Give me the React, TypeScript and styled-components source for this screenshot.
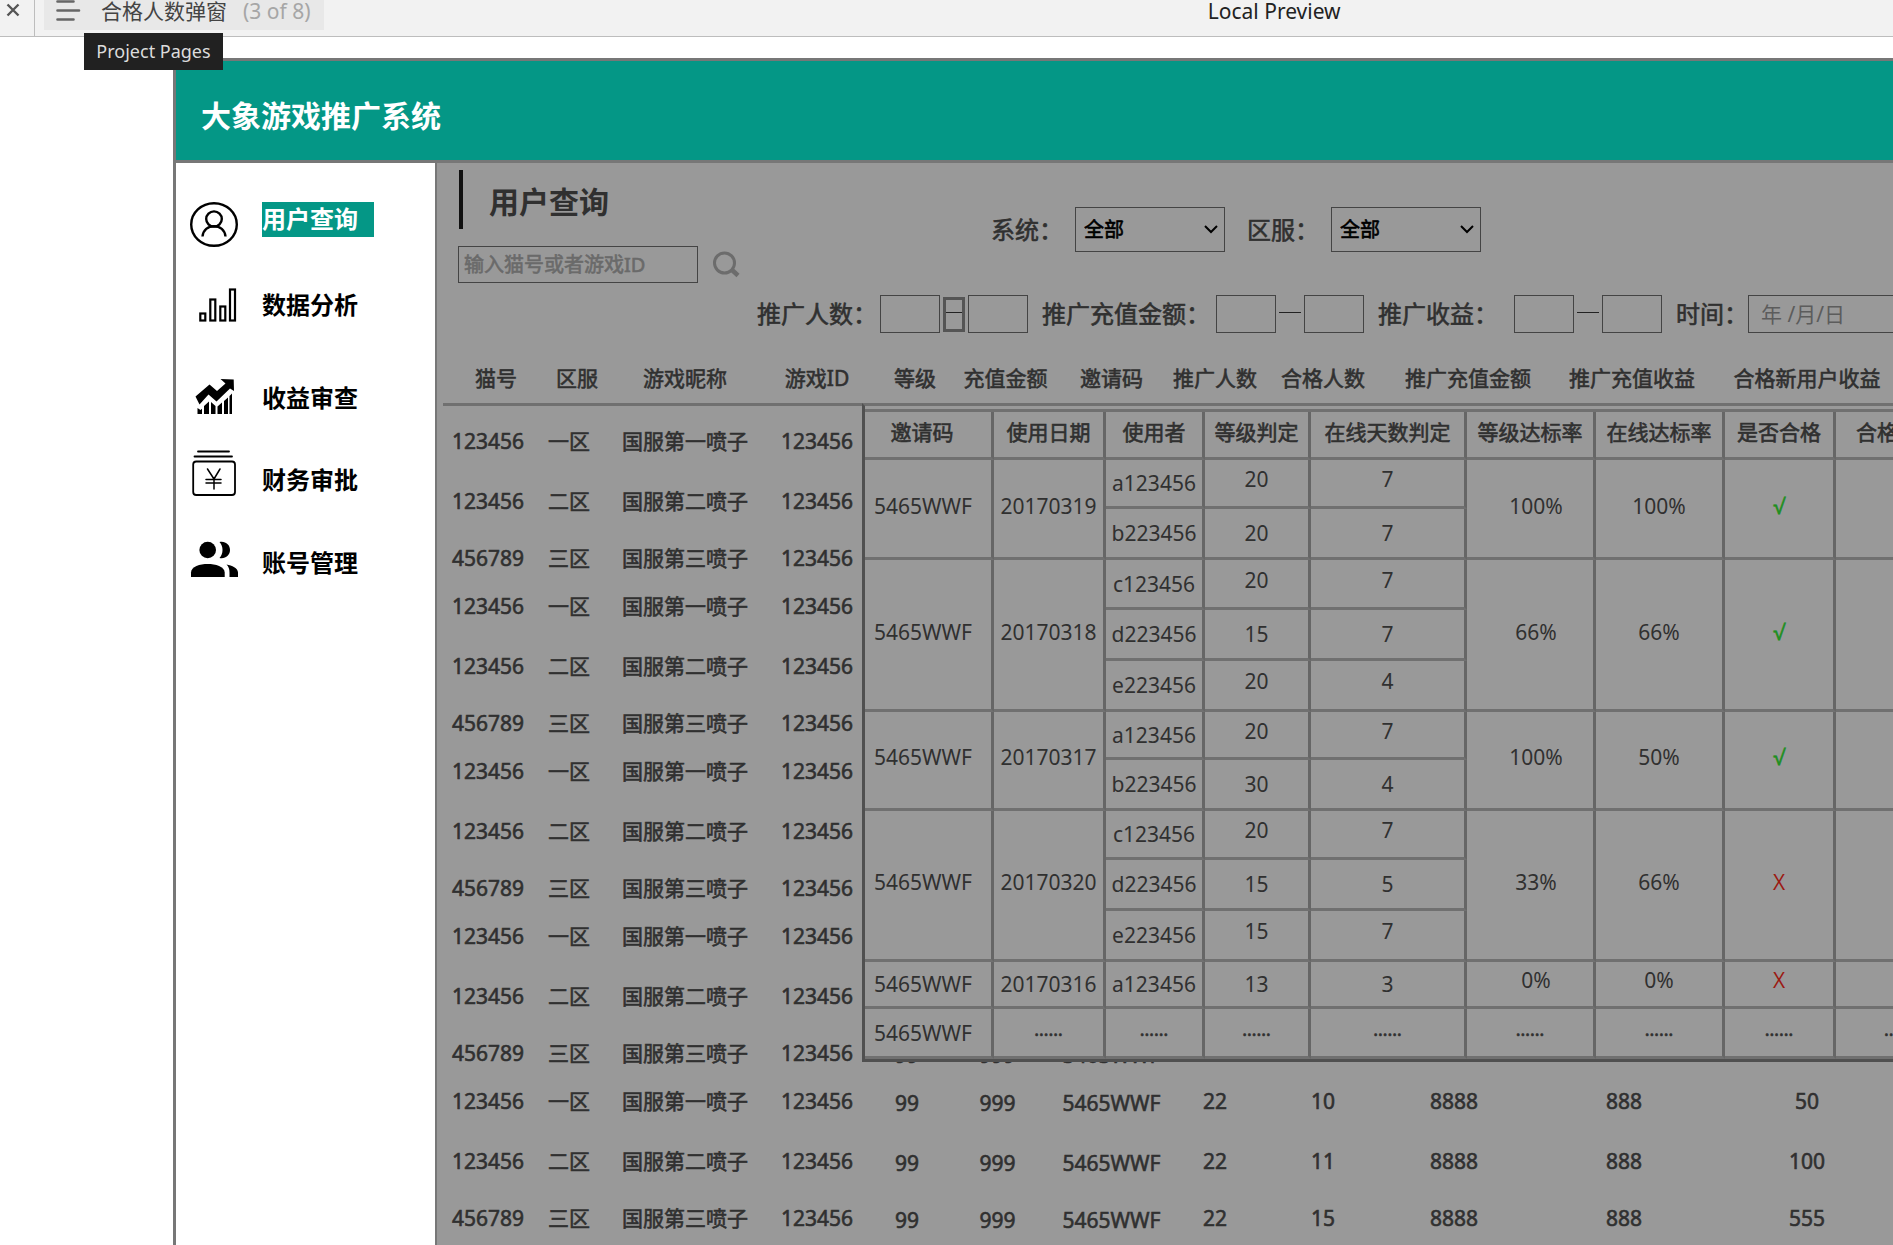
import React from "react";
import styled, { createGlobalStyle, css } from "styled-components";

const teal = "#049786";
const panel = "#999999";
const ink = "#303030";
const line = "#707070";

/* Semi-bold look for families that only ship regular and bold faces. */
const semiBold = css`
  font-weight: 400;
  -webkit-text-stroke: 0.6px currentColor;
`;

const GlobalStyle = createGlobalStyle`
  *, *::before, *::after { box-sizing: border-box; }
  body {
    margin: 0;
    background: #fff;
    color: ${ink};
    font-family: "Noto Sans", "Noto Sans CJK SC", sans-serif;
    font-size: 21px;
    overflow-x: hidden;
  }
  button, input, select { font: inherit; color: inherit; border-radius: 0; margin: 0; }
`;

const Page = styled.div`
  display: flex;
  flex-direction: column;
  min-height: 100vh;
  overflow: hidden;
`;

/* ---------- preview toolbar ---------- */

const Toolbar = styled.header`
  display: flex;
  align-items: flex-start;
  height: 37px;
  background: #f2f2f2;
  border-bottom: 1px solid #bdbdbd;
  font-size: 21px;
  line-height: 22px;
`;

const CloseButton = styled.button`
  width: 35px;
  height: 36px;
  padding: 3px 0 0 6px;
  border: 0;
  border-right: 1px solid #bdbdbd;
  background: none;
  display: flex;
  align-items: flex-start;
`;

const PageMenu = styled.div`
  position: relative;
  margin-left: 9px;
`;

const PageButton = styled.button`
  display: flex;
  align-items: flex-start;
  width: 280px;
  height: 30px;
  padding: 0 0 0 12px;
  border: 0;
  background: #e8e8e8;
  color: #444;
  line-height: 22px;
  white-space: nowrap;
`;

const PageName = styled.span`
  margin-left: 20px;
`;

const PageCount = styled.span`
  margin-left: 16px;
  color: #a6a6a6;
`;

const Tooltip = styled.div`
  position: absolute;
  z-index: 5;
  left: 40px;
  top: 33px;
  width: 139px;
  height: 37px;
  background: #212121;
  color: #dcdcdc;
  font-size: 18px;
  line-height: 36px;
  text-align: center;
  white-space: nowrap;
`;

const Spacer = styled.div<{ $grow: number }>`
  flex: ${(p) => p.$grow} 1 0;
`;

const PreviewLabel = styled.span`
  color: #222;
  white-space: nowrap;
`;

/* ---------- application frame ---------- */

const Frame = styled.div`
  flex: 1;
  display: flex;
  flex-direction: column;
  margin: 21px 0 0 173px;
  border-left: 3px solid #777;
  border-top: 3px solid #777;
`;

const Banner = styled.div`
  height: 102px;
  padding: 0 25px;
  background: ${teal};
  border-bottom: 3px solid #777;
  color: #fff;
  font-size: 30px;
  font-weight: 700;
  line-height: 110px;
`;

const Body = styled.div`
  flex: 1;
  display: flex;
`;

const Sidebar = styled.nav`
  flex: none;
  width: 259px;
  padding: 14px 0 0 14px;
`;

const NavItem = styled.div<{ $height: number }>`
  display: flex;
  align-items: center;
  gap: 24px;
  height: ${(p) => p.$height}px;
`;

const NavLink = styled.a<{ $active?: boolean }>`
  width: 112px;
  height: 35px;
  background: ${(p) => (p.$active ? teal : "transparent")};
  color: ${(p) => (p.$active ? "#fff" : "#000")};
  font-size: 24px;
  font-weight: 700;
  line-height: 34px;
  text-decoration: none;
`;

const NavIcon = styled.svg`
  flex: none;
  width: 48px;
  height: 60px;
  color: #000;
`;

const Main = styled.main`
  position: relative;
  flex: 1;
  min-width: 0;
  background: ${panel};
  border-left: 2px solid #777;
`;

/* ---------- filters ---------- */

const TopArea = styled.div`
  display: flex;
  padding: 7px 0 0 21px;
`;

const TitleColumn = styled.div`
  width: 533px;
`;

const Title = styled.h1`
  height: 59px;
  margin: 0 0 17px 1px;
  padding-left: 26px;
  border-left: 4px solid #111;
  font-size: 30px;
  font-weight: 700;
  line-height: 64px;
`;

const SearchForm = styled.form`
  display: flex;
  align-items: center;
  gap: 14px;
`;

const SearchInput = styled.input`
  width: 240px;
  height: 37px;
  padding: 0 5px;
  border: 1px solid #444;
  background: transparent;
  font-size: 20px;
  ${semiBold}
  &::placeholder { color: #6a6a6a; opacity: 1; }
`;

const SearchButton = styled.button`
  display: flex;
  padding: 0;
  border: 0;
  background: none;
  color: #6c6c6c;
`;

const SelectRow = styled.div`
  display: flex;
  align-items: center;
  gap: 22px;
  height: 45px;
  margin-top: 37px;
`;

const Field = styled.div`
  display: flex;
  align-items: center;
  gap: 12px;
`;

const Label = styled.label<{ $width?: number }>`
  flex: none;
  width: ${(p) => (p.$width ? `${p.$width}px` : "auto")};
  font-size: 24px;
  line-height: 36px;
  white-space: nowrap;
  ${semiBold}
`;

const SelectBox = styled.div`
  position: relative;
`;

const Select = styled.select`
  appearance: none;
  width: 150px;
  height: 45px;
  padding: 0 30px 0 8px;
  border: 1px solid #444;
  background: transparent;
  color: #000;
  font-size: 20px;
  ${semiBold}
`;

const Chevron = styled.svg`
  position: absolute;
  right: 7px;
  top: 18px;
  width: 14px;
  height: 9px;
  pointer-events: none;
`;

const FilterRow = styled.div`
  display: flex;
  align-items: center;
  height: 38px;
  margin: 12px 0 0 320px;
`;

const Range = styled.div`
  display: flex;
  align-items: center;
  gap: 3px;
  margin-right: 14px;
`;

const RangeInput = styled.input`
  width: 60px;
  height: 38px;
  padding: 0 4px;
  border: 1px solid #444;
  background: transparent;
`;

const Dash = styled.span<{ $boxed?: boolean }>`
  display: flex;
  align-items: center;
  width: 22px;
  height: 35px;
  border: ${(p) => (p.$boxed ? "3px solid #555" : "0")};
  &::before {
    content: "";
    width: 100%;
    height: 1px;
    margin-bottom: 4px;
    background: #222;
  }
`;

const DateInput = styled.input`
  flex: 1;
  min-width: 0;
  height: 38px;
  padding: 0 12px;
  border: 1px solid #444;
  border-right: 0;
  background: transparent;
  &::placeholder { color: #5c5c5c; opacity: 1; }
`;

/* ---------- user table ---------- */

const TableArea = styled.div`
  padding: 19px 8px 0 6px;
`;

const UserTable = styled.table`
  width: 100%;
  table-layout: fixed;
  border-collapse: separate;
  border-spacing: 0;
  line-height: 30px;
  white-space: nowrap;
  ${semiBold}
`;

const UserHead = styled.th<{ $lead: boolean }>`
  height: 54px;
  padding: 0 0 0 ${(p) => (p.$lead ? 16 : 0)}px;
  border-bottom: 3px solid ${line};
  font-weight: 400;
`;

const UserRow = styled.tr<{ $height: number }>`
  height: ${(p) => p.$height}px;
  &:first-child { height: ${(p) => p.$height + 9}px; }
  &:first-child td { padding-top: 9px; }
`;

const UserCell = styled.td<{ $low: boolean }>`
  padding: ${(p) => (p.$low ? 4 : 0)}px 0 0;
  text-align: center;
`;

/* ---------- qualified users window ---------- */

const Dialog = styled.section`
  position: absolute;
  left: 425px;
  right: 0;
  top: 240px;
  padding-top: 3px;
  background: ${panel};
  border-top: 3px solid ${line};
  border-left: 3px solid #505050;
  border-bottom: 3px solid #505050;
  overflow: hidden;
`;

const DetailTable = styled.table`
  width: 100%;
  table-layout: fixed;
  border-collapse: separate;
  border-spacing: 0;
  border-top: 3px solid ${line};
  line-height: 28px;
  white-space: nowrap;
`;

const DetailRow = styled.tr<{ $height: number }>`
  height: ${(p) => p.$height}px;
`;

const DetailHead = styled.th`
  padding: 0 0 6px;
  border-right: 3px solid #666;
  border-bottom: 3px solid ${line};
  ${semiBold}
  &:first-child { padding-right: 12px; }
  &:last-child { border-right: 0; padding-left: 20px; text-align: left; }
`;

type CellProps = { $lift?: number; $side?: "code" | "rate" };

const DetailCell = styled.td<CellProps>`
  padding: 0 0 ${(p) => p.$lift || 0}px;
  padding-left: ${(p) => (p.$side === "rate" ? 12 : 0)}px;
  padding-right: ${(p) => (p.$side === "code" ? 10 : 0)}px;
  border-right: 3px solid #666;
  border-bottom: 3px solid ${line};
  text-align: center;
`;

const ResultCell = styled(DetailCell)<{ $ok: boolean }>`
  color: ${(p) => (p.$ok ? "#1f8f1f" : "#9c1a12")};
  font-family: "Open Sans", "Noto Sans CJK SC", sans-serif;
  -webkit-text-stroke: ${(p) => (p.$ok ? "0.6px" : "0")} currentColor;
`;

const EdgeCell = styled(DetailCell)`
  border-right: 0;
  padding-left: 48px;
  text-align: left;
`;

const Dots = styled.span`
  font-size: 18px;
  ${semiBold}
`;

/* ---------- data ---------- */

const userColumns: { name: string; width?: number; lead?: boolean; low?: boolean }[] = [
  { name: "猫号", width: 90, lead: true },
  { name: "区服", width: 72, lead: true },
  { name: "游戏昵称", width: 160 },
  { name: "游戏ID", width: 104 },
  { name: "等级", width: 76, lead: true, low: true },
  { name: "充值金额", width: 105, lead: true, low: true },
  { name: "邀请码", width: 123, low: true },
  { name: "推广人数", width: 84 },
  { name: "合格人数", width: 132 },
  { name: "推广充值金额", width: 130, lead: true },
  { name: "推广充值收益", width: 210, lead: true },
  { name: "合格新用户收益" },
];

const userKinds = [
  { height: 51, cells: ["123456", "一区", "国服第一喷子", "123456", "99", "999", "5465WWF", "22", "10", "8888", "888", "50"] },
  { height: 69, cells: ["123456", "二区", "国服第二喷子", "123456", "99", "999", "5465WWF", "22", "11", "8888", "888", "100"] },
  { height: 45, cells: ["456789", "三区", "国服第三喷子", "123456", "99", "999", "5465WWF", "22", "15", "8888", "888", "555"] },
];

/* Rows behind the window only fill the columns that stay visible. */
const filledColumns = (row: number) => (row < 11 ? 4 : row === 11 ? 7 : 12);

const users = Array.from({ length: 15 }, (_, i) => {
  const kind = userKinds[i % 3];
  return { height: kind.height, cells: kind.cells.map((c, j) => (j < filledColumns(i) ? c : "")) };
});

const detailColumns: { name: string; width?: number }[] = [
  { name: "邀请码", width: 129 },
  { name: "使用日期", width: 112 },
  { name: "使用者", width: 99 },
  { name: "等级判定", width: 106 },
  { name: "在线天数判定", width: 156 },
  { name: "等级达标率", width: 129 },
  { name: "在线达标率", width: 129 },
  { name: "是否合格", width: 111 },
  { name: "合格" },
];

type Member = { user: string; level: string; days: string; height: number };
const groups: { date: string; levelRate: string; onlineRate: string; ok: boolean; members: Member[] }[] = [
  {
    date: "20170319", levelRate: "100%", onlineRate: "100%", ok: true,
    members: [
      { user: "a123456", level: "20", days: "7", height: 49 },
      { user: "b223456", level: "20", days: "7", height: 51 },
    ],
  },
  {
    date: "20170318", levelRate: "66%", onlineRate: "66%", ok: true,
    members: [
      { user: "c123456", level: "20", days: "7", height: 50 },
      { user: "d223456", level: "15", days: "7", height: 51 },
      { user: "e223456", level: "20", days: "4", height: 51 },
    ],
  },
  {
    date: "20170317", levelRate: "100%", onlineRate: "50%", ok: true,
    members: [
      { user: "a123456", level: "20", days: "7", height: 48 },
      { user: "b223456", level: "30", days: "4", height: 51 },
    ],
  },
  {
    date: "20170320", levelRate: "33%", onlineRate: "66%", ok: false,
    members: [
      { user: "c123456", level: "20", days: "7", height: 49 },
      { user: "d223456", level: "15", days: "5", height: 51 },
      { user: "e223456", level: "15", days: "7", height: 51 },
    ],
  },
  {
    date: "20170316", levelRate: "0%", onlineRate: "0%", ok: false,
    members: [{ user: "a123456", level: "13", days: "3", height: 47 }],
  },
];

/* ---------- icons ---------- */

const UserIcon = () => (
  <NavIcon viewBox="0 0 48 60" fill="none" stroke="currentColor" strokeWidth="2.4" aria-hidden="true">
    <ellipse cx="24" cy="35.5" rx="22.8" ry="21.3" />
    <ellipse cx="24" cy="30" rx="7.8" ry="7.6" />
    <path d="M12.5 47.5c.6-6.500 5.500-10.300 11.500-10.300s10.900 3.800 11.500 10.300" />
  </NavIcon>
);

const BarsIcon = () => (
  <NavIcon viewBox="0 0 48 60" fill="none" stroke="currentColor" strokeWidth="2.2" aria-hidden="true">
    <rect x="10.300" y="38.500" width="5" height="7" />
    <rect x="20.300" y="24.500" width="5" height="21" />
    <rect x="30.300" y="31.500" width="5" height="14" />
    <rect x="40" y="14.500" width="5" height="31" />
  </NavIcon>
);

const TrendIcon = () => (
  <NavIcon viewBox="0 0 48 60" fill="currentColor" aria-hidden="true">
    <path d="M5.500 28.500 19.500 16.500l7.500 6.500 8.500-7.500-5-4.500 13.200.5.3 11.500-4-2.500-13.500 13-8-7L9.500 36.500z" />
    <path d="M7.500 40l3 2 1.500-1.200V46H7.500zM14 38l5-4.500V46h-5zM21 34l4.500 4v8H21zM27.500 38.500l4.500-4V46h-4.500zM34 33l4-3.500V46h-4zM39.500 28l2.500-2.500V46h-2.500z" />
  </NavIcon>
);

const MoneyIcon = () => (
  <NavIcon viewBox="0 0 48 60" fill="none" stroke="currentColor" strokeWidth="1.800" strokeLinecap="round" aria-hidden="true">
    <path d="M8 1.500h31M4.500 6.500h37.500" />
    <rect x="3.200" y="11.500" width="41.800" height="33.500" rx="3" />
    <path d="M17.500 19l6.500 10 6-10M24 29v10M16 29.500h15M16 33h15" strokeWidth="1.500" />
  </NavIcon>
);

const PeopleIcon = () => (
  <NavIcon viewBox="0 0 48 60" fill="currentColor" aria-hidden="true">
    <circle cx="17.700" cy="17" r="8.300" />
    <path d="M1 44v-4.500C1 33.500 10 31 17.700 31s17 2.500 17 8.500V44z" />
    <path d="M29.500 9c6-1.200 10.500 2.800 10.500 8s-4.500 9.200-10.500 8c4-4.500 4-11.500 0-16z" />
    <path d="M36.500 31.500c5.500 1 11.500 3.500 11.500 8V44h-8.500v-4.500c0-3.500-1-6-3-8z" />
  </NavIcon>
);

const navItems = [
  { text: "用户查询", height: 84, Icon: UserIcon, active: true },
  { text: "数据分析", height: 88, Icon: BarsIcon },
  { text: "收益审查", height: 98, Icon: TrendIcon },
  { text: "财务审批", height: 66, Icon: MoneyIcon },
  { text: "账号管理", height: 100, Icon: PeopleIcon },
];

/* ---------- components ---------- */

function SelectField({ id, text }: { id: string; text: string }) {
  return (
    <Field>
      <Label htmlFor={id}>{text}</Label>
      <SelectBox>
        <Select id={id} defaultValue="all">
          <option value="all">全部</option>
        </Select>
        <Chevron viewBox="0 0 14 9" fill="none" stroke="#000" strokeWidth="2" aria-hidden="true">
          <path d="M1 1l6 6 6-6" />
        </Chevron>
      </SelectBox>
    </Field>
  );
}

function RangeField({ id, text, width, boxed }: { id: string; text: string; width: number; boxed?: boolean }) {
  return (
    <>
      <Label htmlFor={id} $width={width}>{text}</Label>
      <Range>
        <RangeInput id={id} type="text" />
        <Dash $boxed={boxed} />
        <RangeInput type="text" aria-label={text} />
      </Range>
    </>
  );
}

function DetailGroup({ group }: { group: (typeof groups)[number] }) {
  const span = group.members.length;
  const single = span === 1;
  const groupLift = single ? 0 : 6;
  const rateLift = single ? 8 : 6;
  return (
    <>
      {group.members.map((m, i) => {
        const lift = !single && i % 2 === 0 ? 8 : 0;
        return (
          <DetailRow key={m.user} $height={m.height}>
            {i === 0 && (
              <>
                <DetailCell rowSpan={span} $lift={groupLift} $side="code">5465WWF</DetailCell>
                <DetailCell rowSpan={span} $lift={groupLift}>{group.date}</DetailCell>
              </>
            )}
            <DetailCell>{m.user}</DetailCell>
            <DetailCell $lift={lift}>{m.level}</DetailCell>
            <DetailCell $lift={lift}>{m.days}</DetailCell>
            {i === 0 && (
              <>
                <DetailCell rowSpan={span} $side="rate" $lift={rateLift}>{group.levelRate}</DetailCell>
                <DetailCell rowSpan={span} $lift={rateLift}>{group.onlineRate}</DetailCell>
                <ResultCell rowSpan={span} $lift={rateLift} $ok={group.ok}>{group.ok ? "√" : "X"}</ResultCell>
                <EdgeCell rowSpan={span} />
              </>
            )}
          </DetailRow>
        );
      })}
    </>
  );
}

export default function App() {
  return (
    <Page lang="zh-CN">
      <GlobalStyle />
      <Toolbar>
        <CloseButton aria-label="Close">
          <svg width="14" height="14" viewBox="0 0 14 14" stroke="#555" strokeWidth="2.400" aria-hidden="true">
            <path d="M1.500 1.500l11 11M12.500 1.500l-11 11" />
          </svg>
        </CloseButton>
        <PageMenu>
          <PageButton aria-describedby="pages-tip">
            <svg width="25" height="22" viewBox="0 0 25 22" stroke="#666" strokeWidth="2.600" strokeLinecap="round" aria-hidden="true">
              <path d="M1.500 1.500h16M1.500 10.500h21.500M1.500 19.500h16" />
            </svg>
            <PageName>合格人数弹窗</PageName>
            <PageCount>(3 of 8)</PageCount>
          </PageButton>
          <Tooltip id="pages-tip" role="tooltip">Project Pages</Tooltip>
        </PageMenu>
        <Spacer $grow={8} />
        <PreviewLabel>Local Preview</PreviewLabel>
        <Spacer $grow={5} />
      </Toolbar>

      <Frame>
        <Banner>大象游戏推广系统</Banner>
        <Body>
          <Sidebar>
            {navItems.map(({ text, height, Icon, active }) => (
              <NavItem key={text} $height={height}>
                <Icon />
                <NavLink href="#" $active={active}>{text}</NavLink>
              </NavItem>
            ))}
          </Sidebar>

          <Main>
            <TopArea>
              <TitleColumn>
                <Title>用户查询</Title>
                <SearchForm onSubmit={(e) => e.preventDefault()}>
                  <SearchInput type="text" placeholder="输入猫号或者游戏ID" aria-label="输入猫号或者游戏ID" />
                  <SearchButton type="submit" aria-label="搜索">
                    <svg width="28" height="27" viewBox="0 0 28 27" fill="none" stroke="currentColor" aria-hidden="true">
                      <circle cx="12.500" cy="12" r="10" strokeWidth="3" />
                      <path d="M19.500 18.500l6.500 6" strokeWidth="4.500" />
                    </svg>
                  </SearchButton>
                </SearchForm>
              </TitleColumn>
              <SelectRow>
                <SelectField id="system" text="系统：" />
                <SelectField id="region" text="区服：" />
              </SelectRow>
            </TopArea>

            <FilterRow>
              <RangeField id="people" text="推广人数：" width={123} boxed />
              <RangeField id="recharge" text="推广充值金额：" width={174} />
              <RangeField id="income" text="推广收益：" width={136} />
              <Label htmlFor="date" $width={72}>时间：</Label>
              <DateInput id="date" type="text" placeholder="年 /月/日" />
            </FilterRow>

            <TableArea>
              <UserTable>
                <colgroup>
                  {userColumns.map((c) => (
                    <col key={c.name} width={c.width} />
                  ))}
                </colgroup>
                <thead>
                  <tr>
                    {userColumns.map((c) => (
                      <UserHead key={c.name} $lead={!!c.lead}>{c.name}</UserHead>
                    ))}
                  </tr>
                </thead>
                <tbody>
                  {users.map((u, i) => (
                    <UserRow key={i} $height={u.height}>
                      {u.cells.map((cell, j) => (
                        <UserCell key={j} $low={!!userColumns[j].low}>{cell}</UserCell>
                      ))}
                    </UserRow>
                  ))}
                </tbody>
              </UserTable>
            </TableArea>

            <Dialog aria-label="合格人数弹窗">
              <DetailTable>
                <colgroup>
                  {detailColumns.map((c) => (
                    <col key={c.name} width={c.width} />
                  ))}
                </colgroup>
                <thead>
                  <DetailRow $height={48}>
                    {detailColumns.map((c) => (
                      <DetailHead key={c.name}>{c.name}</DetailHead>
                    ))}
                  </DetailRow>
                </thead>
                <tbody>
                  {groups.map((g) => (
                    <DetailGroup key={g.date} group={g} />
                  ))}
                  <DetailRow $height={50}>
                    <DetailCell $side="code">5465WWF</DetailCell>
                    {detailColumns.slice(1, 8).map((c) => (
                      <DetailCell key={c.name} $lift={8}><Dots>……</Dots></DetailCell>
                    ))}
                    <EdgeCell $lift={8}><Dots>……</Dots></EdgeCell>
                  </DetailRow>
                </tbody>
              </DetailTable>
            </Dialog>
          </Main>
        </Body>
      </Frame>
    </Page>
  );
}
